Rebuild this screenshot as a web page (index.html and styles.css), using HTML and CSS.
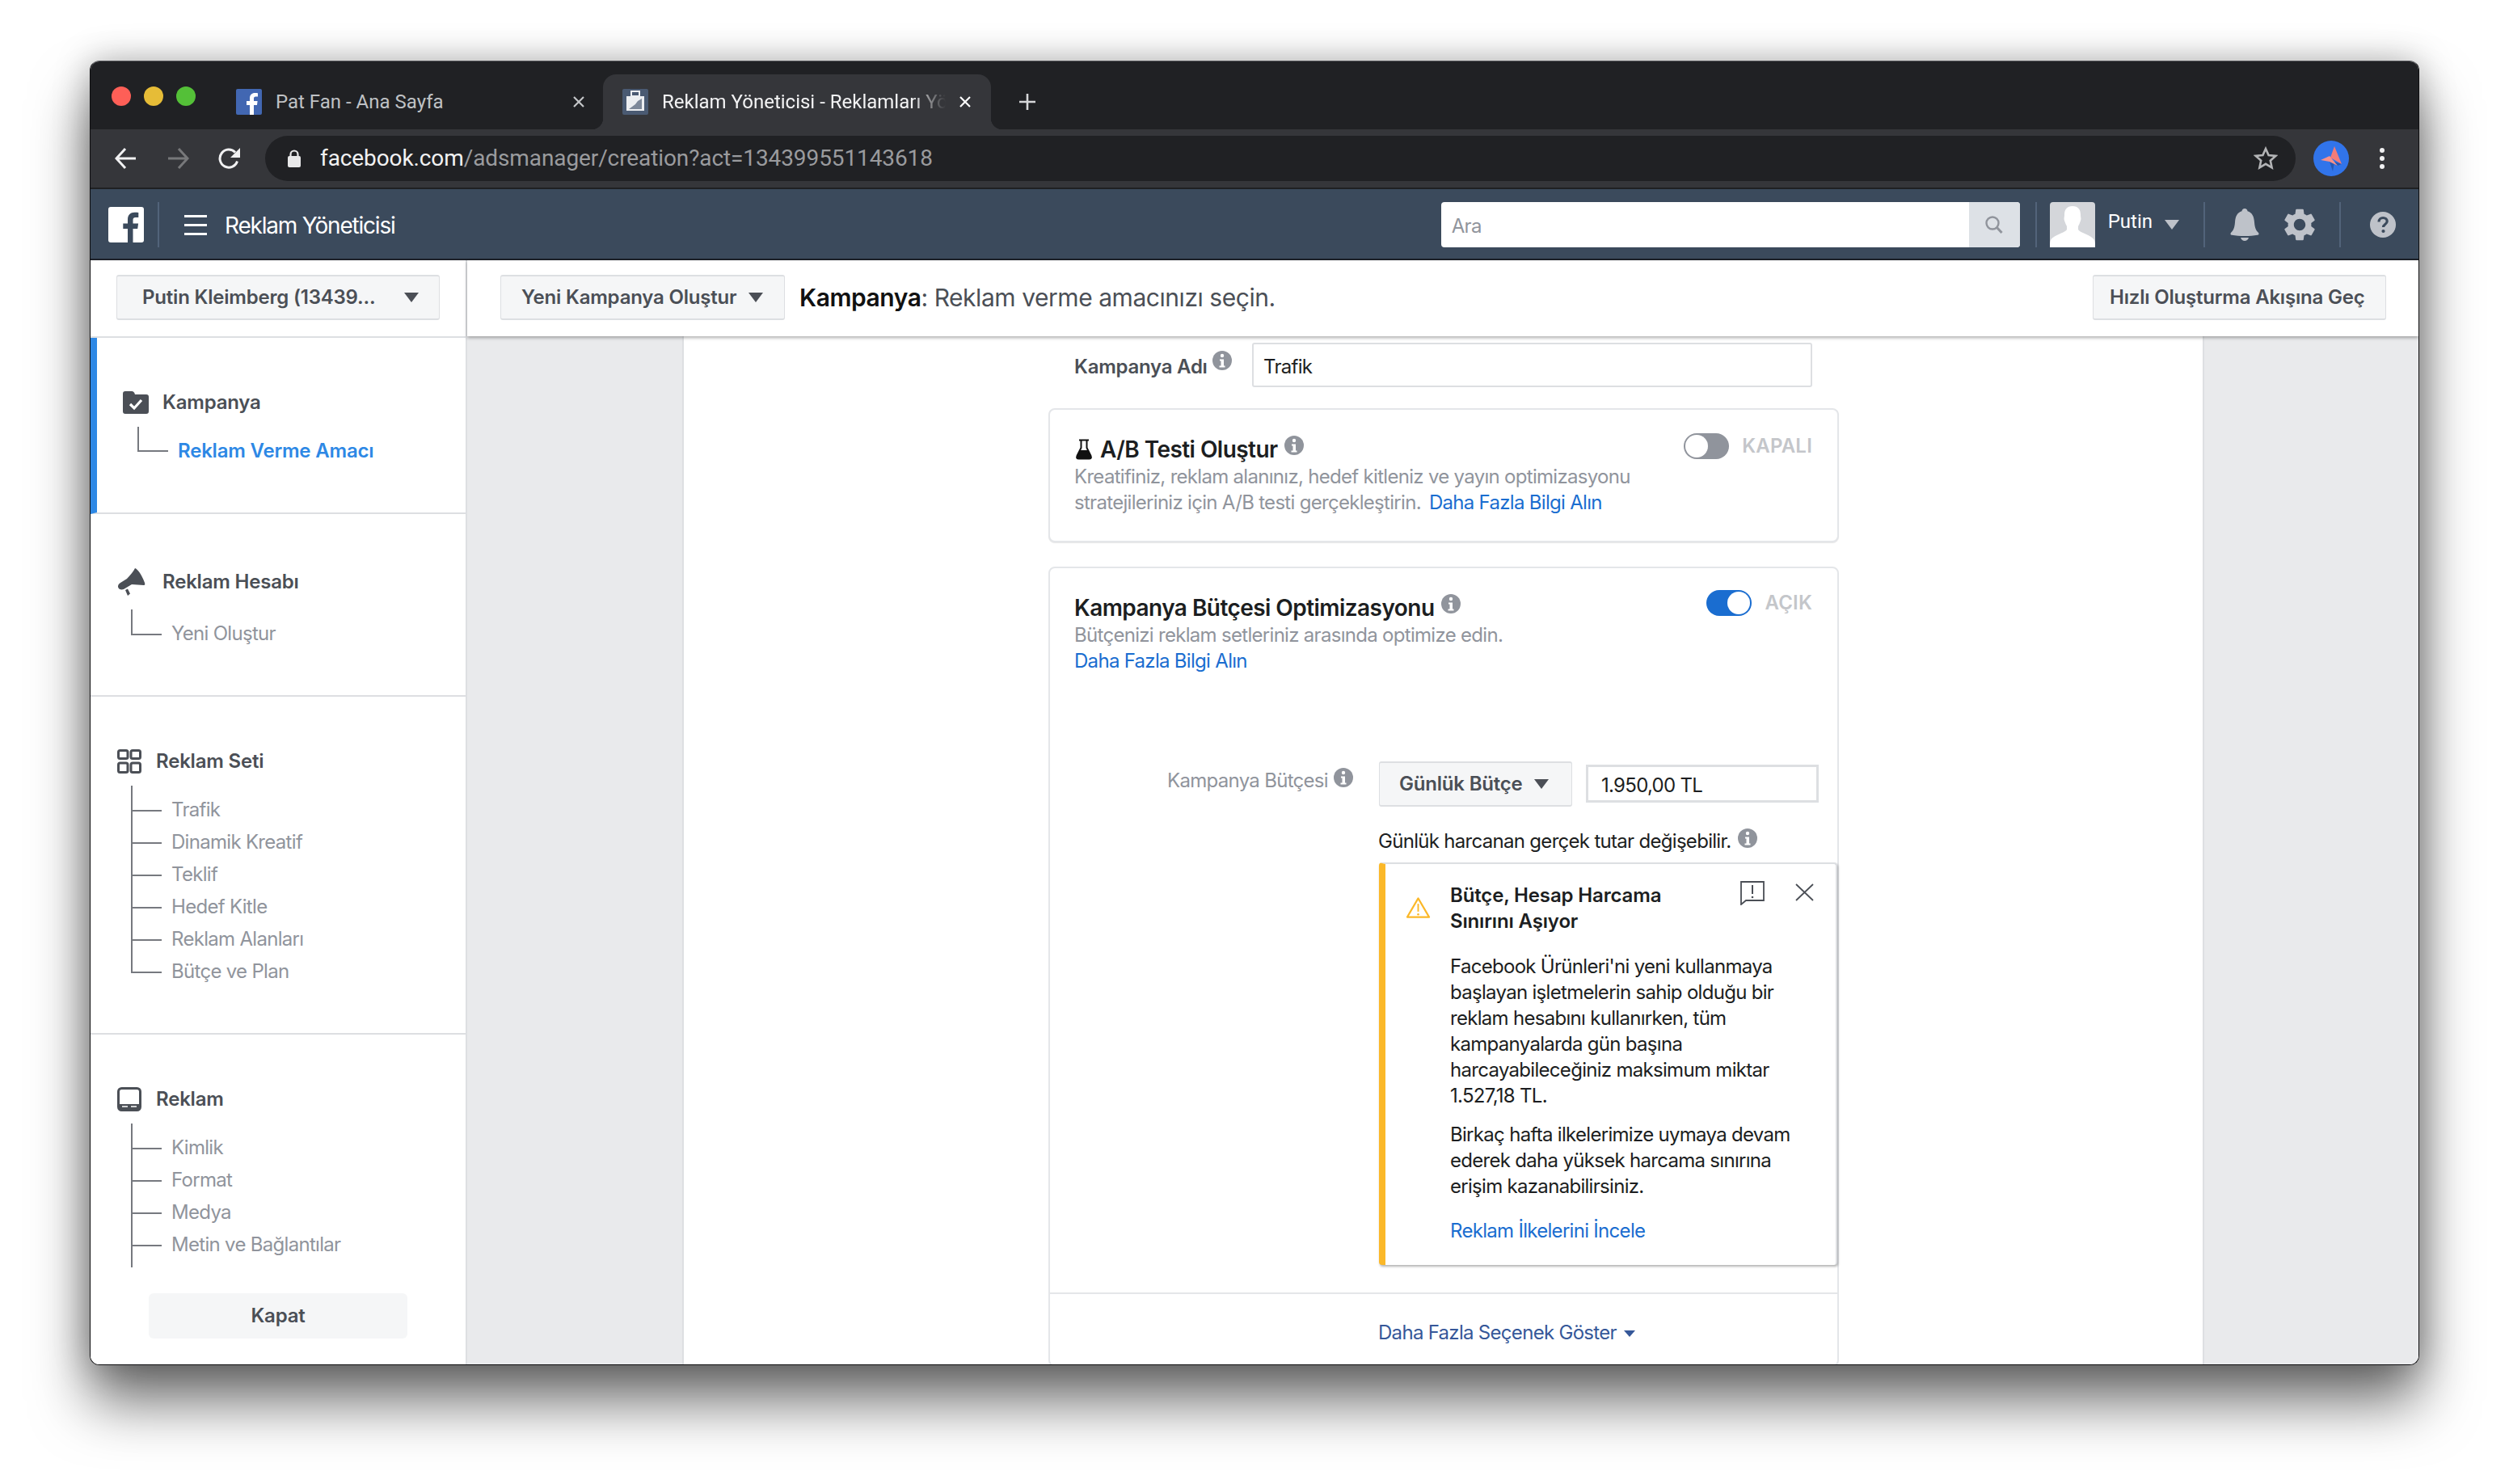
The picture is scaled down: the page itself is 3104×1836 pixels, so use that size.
FILE: index.html
```html
<!DOCTYPE html>
<html lang="tr">
<head>
<meta charset="utf-8">
<title>Reklam Yöneticisi</title>
<link rel="stylesheet" href="styles.css">
</head>
<body>
<div class="window">
  <div class="tabstrip">
    <div class="lights"><i class="light red"></i><i class="light yellow"></i><i class="light green"></i></div>
    <div class="tab">
      <svg class="favicon" viewBox="0 0 32 32"><rect width="32" height="32" rx="2" fill="#4267b2"/><path fill="#fff" d="M22 32V20h4l.6-5H22v-3c0-1.4.4-2.4 2.4-2.4H27V5.2C26.5 5.1 25 5 23.3 5 19.7 5 17 7.2 17 11.5V15h-4v5h4v12z"/></svg>
      <span class="tab-title">Pat Fan - Ana Sayfa</span>
      <svg class="tab-x" viewBox="0 0 16 16"><path d="M2 2l12 12M14 2L2 14" stroke="#c4c6c9" stroke-width="2.2" fill="none"/></svg>
    </div>
    <div class="tab tab--active">
      <svg class="favicon" viewBox="0 0 32 32"><rect width="32" height="32" rx="2" fill="#4a5a72"/><rect x="5" y="9" width="22" height="18" fill="#eceef1"/><rect x="11" y="3" width="10" height="6" fill="none" stroke="#eceef1" stroke-width="2"/><path d="M8 25l8-6 3-4 5-3v13z" fill="#7d8899"/></svg>
      <span class="tab-title tab-title--fade">Reklam Yöneticisi - Reklamları Yönet</span>
      <svg class="tab-x" viewBox="0 0 16 16"><path d="M2 2l12 12M14 2L2 14" stroke="#fff" stroke-width="2.2" fill="none"/></svg>
    </div>
    <svg class="newtab" viewBox="0 0 24 24"><path d="M12 2v20M2 12h20" stroke="#d6d7d9" stroke-width="2.6" fill="none"/></svg>
  </div>

  <div class="toolbar">
    <svg class="nav" viewBox="0 0 28 28"><path d="M26 14H3M13 2L2 14l11 12" stroke="#f1f1f2" stroke-width="3" fill="none"/></svg>
    <svg class="nav" viewBox="0 0 28 28"><path d="M2 14h23M15 2l11 12-11 12" stroke="#77787a" stroke-width="3" fill="none"/></svg>
    <svg class="nav" viewBox="0 0 28 28"><path d="M23.5 17.5A11 11 0 1 1 21 6.5" stroke="#f1f1f2" stroke-width="3" fill="none"/><path d="M27 1v12H15z" fill="#f1f1f2"/></svg>
    <div class="omnibox">
      <svg class="lock" viewBox="0 0 16 22"><rect y="8" width="16" height="14" rx="2" fill="#e8e8e9"/><path d="M3.5 9V6a4.5 4.5 0 0 1 9 0v3" stroke="#e8e8e9" stroke-width="2.2" fill="none"/></svg>
      <div class="url"><span class="url-host">facebook.com</span>/adsmanager/creation?act=134399551143618</div>
      <svg class="star" viewBox="0 0 30 30"><path d="M15 3l3.6 8 8.7.9-6.5 5.8 1.8 8.6L15 21.8l-7.600 4.500 1.800-8.600-6.500-5.800 8.700-.9z" stroke="#b3b4b6" stroke-width="2.6" fill="none" stroke-linejoin="miter"/></svg>
    </div>
    <svg class="profile" viewBox="0 0 44 44"><circle cx="22" cy="22" r="22" fill="#3174ea"/><path d="M20 26l10 5 5-2-9-3-2 12z" fill="#2559b5"/><path d="M26 7l9 22-14-8z" fill="#f47c78"/><path d="M9 24l11-5 10 12-10-5z" fill="#f8908a"/></svg>
    <div class="kebab"><i></i><i></i><i></i></div>
  </div>

  <header class="fbbar">
    <svg class="fblogo" viewBox="0 0 44 44"><rect width="44" height="44" rx="3" fill="#fff"/><path fill="#3b4a5c" d="M30.500 44V27h5.700l.9-6.600h-6.600v-4.200c0-1.900.5-3.200 3.300-3.200h3.500V7.100C36.700 7 34.800 6.800 32.500 6.800c-5 0-8.500 3.100-8.500 8.800v4.800h-5.700V27H24v17z"/></svg>
    <i class="vsep vsep--logo"></i>
    <div class="burger"><i></i><i></i><i></i></div>
    <div class="fbtitle">Reklam Yöneticisi</div>
    <div class="search">
      <div class="search-input">Ara</div>
      <div class="search-btn"><svg viewBox="0 0 24 24"><circle cx="10" cy="10" r="7.500" stroke="#90949c" stroke-width="2.400" fill="none"/><path d="M15.500 15.500l6 6.500" stroke="#90949c" stroke-width="3" fill="none"/></svg></div>
    </div>
    <i class="vsep vsep--search"></i>
    <svg class="userpic" viewBox="0 0 56 56"><rect width="56" height="56" rx="4" fill="#d4d6da"/><path fill="#fff" d="M28 5c7 0 10 4 10 11 0 3 1 4 0 7-1 3-2 5-3 7v4c2 4 17 7 20 13 1 3 1 5 1 9H0c0-4 0-6 1-9 3-6 18-9 20-13v-4c-1-2-2-4-3-7-1-3 0-4 0-7 0-7 3-11 10-11z"/></svg>
    <div class="username">Putin</div>
    <i class="caret caret--light"></i>
    <i class="vsep vsep--user"></i>
    <svg class="bell" viewBox="0 0 36 40"><path fill="#bec2c9" d="M18 0c2 0 3.500 1.400 3.500 3.200C27.500 5 29.500 10 30 17c.5 7 2 10 5 13 1 1.200.6 2.500-1 2.800-5 1-10 1.200-16 1.200s-11-.2-16-1.200c-1.600-.3-2-1.600-1-2.800 3-3 4.500-6 5-13 .5-7 2.500-12 8.500-13.800C14.500 1.400 16 0 18 0zM13 36h10c-.8 2.400-2.800 4-5 4s-4.200-1.600-5-4z"/></svg>
    <svg class="gear" viewBox="2.300 2 19.400 20"><path fill="#bec2c9" d="M19.140 12.940c.04-.3.06-.61.06-.94 0-.32-.02-.64-.07-.94l2.030-1.580a.49.49 0 0 0 .12-.61l-1.920-3.320a.488.488 0 0 0-.59-.22l-2.390.96c-.5-.38-1.030-.7-1.620-.94l-.36-2.540a.484.484 0 0 0-.48-.41h-3.840c-.24 0-.43.17-.47.41l-.36 2.540c-.59.24-1.130.57-1.620.94l-2.390-.96c-.22-.08-.47 0-.59.22L2.740 8.870c-.12.21-.08.47.12.61l2.030 1.580c-.05.3-.09.63-.09.94s.02.64.07.94l-2.030 1.580a.49.49 0 0 0-.12.61l1.920 3.320c.12.22.37.29.59.22l2.390-.96c.5.38 1.030.7 1.620.94l.36 2.540c.05.24.24.41.48.41h3.840c.24 0 .44-.17.47-.41l.36-2.540c.59-.24 1.130-.56 1.620-.94l2.390.96c.22.08.47 0 .59-.22l1.920-3.320c.12-.22.07-.47-.12-.61l-2.010-1.580zM12 15.600c-1.980 0-3.600-1.620-3.600-3.600s1.620-3.600 3.600-3.600 3.600 1.620 3.600 3.600-1.620 3.600-3.600 3.600z"/></svg>
    <i class="vsep vsep--gear"></i>
    <svg class="help" viewBox="0 0 32 32"><circle cx="16" cy="16" r="16" fill="#bec2c9"/><path d="M11 12.500c0-3 2.200-5 5.200-5s5 1.800 5 4.300c0 3.700-4.700 3.800-4.700 7.200" stroke="#3b4a5c" stroke-width="3.200" fill="none"/><circle cx="16.500" cy="24" r="2.100" fill="#3b4a5c"/></svg>
  </header>

  <div class="app">
    <aside class="sidebar">
      <div class="account">
        <button class="dropdown dropdown--account"><span>Putin Kleimberg (13439...</span><i class="caret"></i></button>
      </div>

      <section class="step step--active">
        <div class="step-head">
          <svg class="step-icon" viewBox="0 0 32 28"><path fill="#4b4f56" d="M3 0h8c2 0 3 1 4 4h14c2 0 3 1 3 3v18c0 2-1 3-3 3H3c-2 0-3-1-3-3V3c0-2 1-3 3-3z"/><path d="M9 16l5 5 9-10" stroke="#fff" stroke-width="3.200" fill="none"/></svg>
          <span>Kampanya</span>
        </div>
        <ul class="tree tree--one">
          <li class="tree-item tree-item--current"><i class="tick"></i>Reklam Verme Amacı</li>
        </ul>
      </section>

      <section class="step step--account">
        <div class="step-head step-head--wide">
          <svg class="step-icon step-icon--mega" viewBox="0 0 34 34"><path fill="#4b4f56" d="M21 0c3 1 8 7 12 18 .5 2 .500 3-1 3L17 20 7 26l-2.500 .5C1 26 0 24 0 22.500c0-2 1-3 3-4.500l8-5C15 9 19 4 21 0zM9 27l3-1.500 3 6-3 2.500z"/></svg>
          <span>Reklam Hesabı</span>
        </div>
        <ul class="tree tree--two">
          <li class="tree-item"><i class="tick"></i>Yeni Oluştur</li>
        </ul>
      </section>

      <section class="step step--set">
        <div class="step-head">
          <svg class="step-icon step-icon--square" viewBox="0 0 30 30"><g fill="none" stroke="#4b4f56" stroke-width="3"><rect x="1.500" y="1.500" width="11.500" height="10" rx="2"/><rect x="17" y="1.500" width="11.500" height="10" rx="2"/><rect x="1.500" y="17" width="11.500" height="11.500" rx="2"/><rect x="17" y="17" width="11.500" height="11.500" rx="2"/></g></svg>
          <span>Reklam Seti</span>
        </div>
        <ul class="tree tree--set">
          <li class="tree-item"><i class="tick"></i>Trafik</li>
          <li class="tree-item"><i class="tick"></i>Dinamik Kreatif</li>
          <li class="tree-item"><i class="tick"></i>Teklif</li>
          <li class="tree-item"><i class="tick"></i>Hedef Kitle</li>
          <li class="tree-item"><i class="tick"></i>Reklam Alanları</li>
          <li class="tree-item"><i class="tick"></i>Bütçe ve Plan</li>
        </ul>
      </section>

      <section class="step step--ad">
        <div class="step-head">
          <svg class="step-icon step-icon--square" viewBox="0 0 30 30"><rect x="1.500" y="1.500" width="27" height="27" rx="4" fill="none" stroke="#4b4f56" stroke-width="3"/><path d="M2 21h26v6H2z" fill="#4b4f56"/><path d="M6 24h7M17 24h7" stroke="#fff" stroke-width="1.500"/></svg>
          <span>Reklam</span>
        </div>
        <ul class="tree tree--ad">
          <li class="tree-item"><i class="tick"></i>Kimlik</li>
          <li class="tree-item"><i class="tick"></i>Format</li>
          <li class="tree-item"><i class="tick"></i>Medya</li>
          <li class="tree-item"><i class="tick"></i>Metin ve Bağlantılar</li>
        </ul>
        <button class="close-btn">Kapat</button>
      </section>
    </aside>

    <main class="main">
      <div class="subheader">
        <button class="dropdown dropdown--new"><span>Yeni Kampanya Oluştur</span><i class="caret"></i></button>
        <div class="crumb"><b>Kampanya</b>: Reklam verme amacınızı seçin.</div>
        <button class="dropdown dropdown--quick">Hızlı Oluşturma Akışına Geç</button>
      </div>

      <div class="canvas">
        <div class="sheet">
          <div class="form">
            <div class="name-row">
              <label class="name-label">Kampanya Adı</label>
              <svg class="info info--name" viewBox="0 0 24 24"><use href="#i"/></svg>
              <div class="input input--name">Trafik</div>
            </div>

            <section class="card card--ab">
              <div class="card-text">
                <h2 class="card-title"><svg class="flask" viewBox="0 0 22 26"><path d="M5 1.500h12M7.500 2v9L2.500 21c-1 2.500 0 3.500 2 3.500h13c2 0 3-1 2-3.500l-5-10V2" fill="none" stroke="#111" stroke-width="2"/><path d="M6 14h10l4 9-1 2H3l-1-2z" fill="#111"/></svg>A/B Testi Oluştur<svg class="info info--title" viewBox="0 0 24 24"><use href="#i"/></svg></h2>
                <p class="card-desc">Kreatifiniz, reklam alanınız, hedef kitleniz ve yayın optimizasyonu<br>stratejileriniz için A/B testi gerçekleştirin. <a class="link link--inline">Daha Fazla Bilgi Alın</a></p>
              </div>
              <div class="switch"><span class="toggle"><i></i></span><span class="switch-label">KAPALI</span></div>
            </section>

            <section class="card card--budget">
              <div class="card-top">
                <div class="card-text card-text--budget">
                  <h2 class="card-title">Kampanya Bütçesi Optimizasyonu<svg class="info info--title" viewBox="0 0 24 24"><use href="#i"/></svg></h2>
                  <p class="card-desc">Bütçenizi reklam setleriniz arasında optimize edin.<br><a class="link">Daha Fazla Bilgi Alın</a></p>
                </div>
                <div class="switch"><span class="toggle toggle--on"><i></i></span><span class="switch-label">AÇIK</span></div>
              </div>

              <div class="budget">
                <div class="budget-label">Kampanya Bütçesi<svg class="info info--budget" viewBox="0 0 24 24"><use href="#i"/></svg></div>
                <div class="budget-body">
                  <div class="budget-controls">
                    <button class="dropdown dropdown--daily"><span>Günlük Bütçe</span><i class="caret"></i></button>
                    <div class="input input--amount">1.950,00 TL</div>
                  </div>
                  <div class="budget-note">Günlük harcanan gerçek tutar değişebilir.<svg class="info info--note" viewBox="0 0 24 24"><use href="#i"/></svg></div>
                  <div class="warning">
                    <svg class="warning-icon" viewBox="0 0 32 28"><path d="M16 2L2 26h28z" fill="none" stroke="#fbb829" stroke-width="2.200" stroke-linejoin="round"/><path d="M16 9v10" stroke="#fbb829" stroke-width="2"/><circle cx="16" cy="22.500" r="1.300" fill="#fbb829"/></svg>
                    <div class="warning-body">
                      <div class="warning-head">
                        <h3 class="warning-title">Bütçe, Hesap Harcama<br>Sınırını Aşıyor</h3>
                        <svg class="feedback" viewBox="0 0 30 30"><path d="M1 29V1h28v23H7z" fill="none" stroke="#4b4f56" stroke-width="1.800"/><path d="M15 5v11" stroke="#4b4f56" stroke-width="2"/><circle cx="15" cy="20" r="1.300" fill="#4b4f56"/></svg>
                        <svg class="dismiss" viewBox="0 0 23 22"><path d="M1 1l21 20M22 1L1 21" stroke="#4b4f56" stroke-width="1.800" fill="none"/></svg>
                      </div>
                      <p class="warning-text">Facebook Ürünleri'ni yeni kullanmaya<br>başlayan işletmelerin sahip olduğu bir<br>reklam hesabını kullanırken, tüm<br>kampanyalarda gün başına<br>harcayabileceğiniz maksimum miktar<br>1.527,18 TL.</p>
                      <p class="warning-text">Birkaç hafta ilkelerimize uymaya devam<br>ederek daha yüksek harcama sınırına<br>erişim kazanabilirsiniz.</p>
                      <a class="link link--warning">Reklam İlkelerini İncele</a>
                    </div>
                  </div>
                </div>
              </div>

              <div class="more"><span>Daha Fazla Seçenek Göster</span><i class="caret caret--small"></i></div>
            </section>
          </div>
        </div>
      </div>
    </main>
  </div>
</div>
<svg class="defs" aria-hidden="true"><symbol id="i" viewBox="0 0 24 24"><circle cx="12" cy="12" r="12" fill="#90949c"/><circle cx="12" cy="6" r="2.200" fill="#fff"/><path d="M9 10.500h5v8h1.500v2h-7v-2H10.500v-6H9z" fill="#fff"/></symbol></svg>
</body>
</html>
```

FILE: styles.css
```css
* { box-sizing: border-box; }
html, body { margin: 0; height: 100%; }
body {
  width: 3104px;
  height: 1836px;
  padding: 75px 0 0 111px;
  overflow: hidden;
  background: #fff;
  font-family: Inter, "Liberation Sans", sans-serif;
  font-size: 24px;
  line-height: 32px;
  letter-spacing: -0.7px;
  color: #1c1e21;
}
i { display: block; }
ul { list-style: none; margin: 0; padding: 0; }
p, h2, h3 { margin: 0; }
button { font: inherit; letter-spacing: inherit; margin: 0; }
.defs { width: 0; height: 0; display: block; }

.window {
  width: 2882px;
  height: 1614px;
  border: 1px solid #0e0e10;
  border-top-color: #55565a;
  border-radius: 12px;
  overflow: hidden;
  display: flex;
  flex-direction: column;
  box-shadow: 0 46px 70px rgba(0,0,0,.56), 0 0 44px rgba(0,0,0,.28);
  background: #fff;
}

/* browser chrome */
.tabstrip {
  height: 84px;
  flex: none;
  background: #202124;
  display: flex;
  align-items: flex-end;
  font-family: Roboto, sans-serif;
  letter-spacing: 0;
}
.lights { display: flex; gap: 16px; padding: 0 0 29px 26px; width: 156px; align-self: flex-end; }
.light { width: 24px; height: 24px; border-radius: 50%; }
.red { background: #fe5f57; }
.yellow { background: #e6bc37; }
.green { background: #54c038; }
.tab {
  width: 478px;
  height: 68px;
  padding: 0 22px 0 24px;
  display: flex;
  align-items: center;
  color: #bfc1c4;
}
.tab--active {
  width: 480px;
  padding-right: 24px;
  background: #35363a;
  color: #f3f3f4;
  border-radius: 16px 16px 0 0;
  position: relative;
}
.tab--active::before,
.tab--active::after {
  content: "";
  position: absolute;
  bottom: 0;
  width: 14px;
  height: 14px;
}
.tab--active::before { left: -14px; background: radial-gradient(circle at 0 0, transparent 14px, #35363a 14.5px); }
.tab--active::after { right: -14px; background: radial-gradient(circle at 100% 0, transparent 14px, #35363a 14.5px); }
.favicon { width: 32px; height: 32px; flex: none; margin-right: 17px; }
.tab-title { flex: 1; min-width: 0; white-space: nowrap; overflow: hidden; }
.tab-title--fade { -webkit-mask-image: linear-gradient(90deg, #000 88%, transparent 100%); mask-image: linear-gradient(90deg, #000 88%, transparent 100%); }
.tab-x { width: 16px; height: 16px; flex: none; margin-left: 16px; }
.newtab { width: 24px; height: 24px; margin: 0 0 22px 33px; }

.toolbar {
  height: 72px;
  flex: none;
  background: #35363a;
  display: flex;
  align-items: center;
  padding-left: 30px;
}
.nav { width: 28px; height: 28px; flex: none; margin-right: 36px; }
.omnibox {
  width: 2512px;
  height: 56px;
  margin-left: -6px;
  border-radius: 28px;
  background: #202124;
  display: flex;
  align-items: center;
  padding: 0 22px 0 28px;
}
.lock { width: 16px; height: 22px; flex: none; }
.url { flex: 1; margin-left: 24px; font: 28px/32px Roboto, sans-serif; letter-spacing: -0.1px; color: #9a9b9e; white-space: nowrap; }
.url-host { color: #f1f1f2; }
.star { width: 30px; height: 30px; flex: none; }
.profile { width: 44px; height: 44px; flex: none; margin-left: 22px; }
.kebab { margin-left: 38px; display: flex; flex-direction: column; gap: 4px; }
.kebab i { width: 6px; height: 6px; border-radius: 50%; background: #f1f1f2; }

/* facebook bar */
.fbbar {
  height: 90px;
  flex: none;
  background: #3b4a5c;
  border-top: 2px solid #1f2023;
  border-bottom: 2px solid #1d2129;
  display: flex;
  align-items: center;
  padding: 2px 28px 0 22px;
  color: #fff;
}
.fblogo { width: 44px; height: 44px; flex: none; }
.vsep { width: 2px; height: 56px; flex: none; background: #52637a; }
.vsep--logo { margin-left: 17px; }
.burger { margin-left: 31px; display: flex; flex-direction: column; gap: 8px; }
.burger i { width: 28px; height: 3px; background: #fff; }
.fbtitle { margin: 2px 0 0 22px; font-size: 28px; letter-spacing: -1.2px; flex: none; }
.search {
  margin-left: auto;
  width: 716px;
  height: 56px;
  flex: none;
  display: flex;
  background: #fff;
  border-radius: 4px;
  overflow: hidden;
}
.search-input { flex: 1; padding: 14px 0 0 13px; color: #90949c; }
.search-btn { width: 63px; background: #dde1e6; display: flex; align-items: center; justify-content: center; }
.search-btn svg { width: 24px; height: 24px; }
.vsep--search { margin-left: 19px; }
.userpic { width: 56px; height: 56px; flex: none; margin-left: 16px; }
.username { margin-left: 16px; flex: none; margin-top: -8px; font-family: Roboto, sans-serif; letter-spacing: 0; }
.caret { width: 0; height: 0; flex: none; border-style: solid; border-width: 12px 9px 0; border-color: #4b4f56 transparent transparent; }
.caret--light { margin-left: 15px; border-top-color: #bec2c9; }
.caret--small { border-width: 8px 7px 0; border-top-color: #365899; margin-left: 9px; }
.vsep--user { margin-left: 30px; }
.bell { width: 36px; height: 40px; flex: none; margin-left: 31px; }
.gear { width: 40px; height: 40px; flex: none; margin-left: 30px; }
.vsep--gear { margin-left: 29px; }
.help { width: 32px; height: 32px; flex: none; margin-left: 36px; }

/* app */
.app { flex: 1; min-height: 0; display: flex; }
.sidebar {
  width: 466px;
  flex: none;
  border-right: 2px solid #dddfe2;
  background: #fff;
  color: #4b4f56;
}
.account { height: 96px; padding: 18px 0 0 32px; border-bottom: 2px solid #dddfe2; }
.dropdown {
  height: 56px;
  display: flex;
  align-items: center;
  justify-content: space-between;
  background: #f5f6f7;
  color: #4b4f56;
  border: 1px solid #dddfe2;
  border-width: 2px 1px;
  border-radius: 3px;
  font-weight: 600;
  letter-spacing: -0.2px;
  white-space: nowrap;
  flex: none;
}
.dropdown--account { width: 400px; padding: 0 25px 0 31px; }
.dropdown--new { width: 352px; padding: 0 26px 0 25px; }
.dropdown--quick { width: 363px; padding: 0 20px; }
.dropdown--daily { width: 239px; padding: 0 28px 0 24px; }

.step { border-bottom: 2px solid #dddfe2; padding-left: 33px; }
.step--active { height: 218px; padding-top: 64px; padding-left: 32px; border-left: 8px solid #2d88e5; }
.step--account { height: 226px; padding-top: 68px; }
.step--set { height: 418px; padding-top: 64px; }
.step--ad { border-bottom: 0; padding-top: 64px; }
.step-head { height: 32px; display: flex; align-items: center; font-weight: 600; letter-spacing: -0.2px; gap: 17px; }
.step-head--wide { gap: 20px; }
.step-icon { width: 32px; height: 28px; flex: none; }
.step-icon--mega { width: 36px; height: 34px; }
.step-icon--square { width: 30px; height: 30px; margin-right: 1px; }
.tree {
  display: flex;
  flex-direction: column;
  background: linear-gradient(#76797f, #76797f) no-repeat 0 0 / 2px 100%;
  padding-top: 10px;
  margin-left: 18px;
  color: #90949c;
}
.tree--one { margin-top: 14px; }
.tree--two { margin-top: 18px; margin-left: 17px; padding-top: 11px; }
.tree--set { margin-top: 14px; margin-left: 17px; padding-top: 11px; }
.tree--ad { margin-top: 14px; margin-left: 17px; padding-top: 11px; padding-bottom: 7px; }
.tree-item { height: 40px; flex: none; display: flex; align-items: center; padding: 0 0 3px 2px; }
.tree--one .tree-item:last-child, .tree--two .tree-item:last-child, .tree--set .tree-item:last-child { margin-bottom: -19px; }
.tree-item--current { color: #2d88e5; font-weight: 600; letter-spacing: -0.2px; padding-bottom: 0; }
.tick { width: 36px; height: 2px; flex: none; margin: 3px 12px 0 0; background: #76797f; }
.tree-item--current .tick { margin-top: 0; }
.close-btn {
  display: block;
  width: 320px;
  height: 56px;
  margin: 32px 0 0 39px;
  border: 0;
  border-radius: 6px;
  background: #f5f6f7;
  color: #4b4f56;
  font-weight: 600;
  letter-spacing: -0.2px;
}

.main { flex: 1; min-width: 0; display: flex; flex-direction: column; background: #e9eaec; }
.subheader {
  height: 94px;
  flex: none;
  background: #fff;
  display: flex;
  align-items: center;
  padding: 0 40px 3px 41px;
  box-shadow: 0 2px 4px rgba(0,0,0,.32);
  position: relative;
}
.crumb { flex: 1; margin-left: 18px; font-size: 30px; letter-spacing: -0.45px; color: #4b4f56; white-space: nowrap; }
.crumb b { font-weight: 600; color: #111; }

.canvas { flex: 1; min-height: 0; display: flex; justify-content: center; overflow: hidden; }
.sheet { width: 1883px; flex: none; background: #fff; border: solid #dddfe2; border-width: 0 2px; }
.form { width: 978px; margin: 0 auto; padding-top: 8px; transform: translateX(1px); }
.name-row { display: flex; height: 55px; padding-left: 32px; }
.name-label { padding-top: 14px; font-weight: 600; letter-spacing: -0.25px; color: #4b4f56; width: 171px; flex: none; }
.info { width: 24px; height: 24px; flex: none; display: block; }
.info--name { margin: 10px 0 0 0; }
.input { background: #fff; border: 2px solid #dddfe2; color: #1c1e21; }
.input--name { margin-left: 25px; width: 693px; padding: 12px 12px; border-radius: 3px; }
.card { border: 2px solid #e4e6e9; border-radius: 8px; background: #fff; padding: 29px 31px 0 30px; }
.card--ab { margin-top: 26px; height: 166px; display: flex; justify-content: space-between; align-items: flex-start; box-shadow: 0 1px 1px rgba(0,0,0,.1); }
.card--budget { margin-top: 30px; padding-top: 27px; }
.card-top { display: flex; justify-content: space-between; align-items: flex-start; }
.card-text { margin-top: 4px; }
.card-text--budget { margin-top: 6px; }
.card-title { font-size: 28px; line-height: 32px; font-weight: 600; letter-spacing: -0.55px; color: #1c1e21; display: flex; align-items: flex-start; white-space: nowrap; }
.flask { width: 22px; height: 26px; flex: none; margin: 3px 9px 0 1px; }
.info--title { margin: -1px 0 0 8px; }
.card-desc { margin-top: 2px; color: #90949c; white-space: nowrap; }
.link { color: #1a6dd0; }
.link--inline { margin-left: 4px; }
.switch { display: flex; align-items: center; gap: 16px; font-weight: 600; letter-spacing: 0.2px; color: #c4c6ca; }
.toggle { width: 56px; height: 32px; border-radius: 16px; padding: 2px; background: #90949c; display: flex; justify-content: flex-start; flex: none; }
.toggle i { width: 28px; height: 28px; border-radius: 50%; background: #fff; }
.toggle--on { background: #1a6dd0; justify-content: flex-end; }

.budget { margin: 108px -31px 0 0; display: grid; grid-template-columns: 377px 1fr; }
.budget-label { padding: 8px 0 0 115px; color: #90949c; display: flex; align-items: flex-start; white-space: nowrap; }
.info--budget { margin: 0 0 0 7px; }
.budget-body { min-width: 0; }
.budget-controls { display: flex; gap: 17px; align-items: flex-start; }
.input--amount { width: 288px; height: 47px; margin-top: 4px; border-width: 3px; padding: 7px 16px; }
.budget-note { margin: 27px 0 0 -1px; display: flex; white-space: nowrap; color: #1c1e21; }
.info--note { margin: 0 0 0 8px; }
.warning {
  margin-top: 10px;
  height: 498px;
  display: flex;
  background: #fff;
  border: 2px solid #dddfe2;
  border-left: 8px solid #fbb829;
  border-bottom: 0;
  border-radius: 4px;
  box-shadow: 1px 2px 3px rgba(0,0,0,.3);
  padding: 23px 27px 0 25px;
}
.warning-icon { width: 31px; height: 28px; flex: none; margin: 17px 24px 0 0; }
.warning-body { flex: 1; min-width: 0; }
.warning-head { display: flex; align-items: flex-start; }
.warning-title { flex: 1; font-size: 24px; line-height: 32px; font-weight: 600; letter-spacing: -0.15px; }
.feedback { width: 30px; height: 30px; flex: none; margin-top: -2px; }
.dismiss { width: 23px; height: 22px; flex: none; margin: 1px 0 0 38px; }
.warning-text { margin-top: 24px; white-space: nowrap; }
.warning-text + .warning-text { margin-top: 16px; }
.link--warning { display: block; margin-top: 23px; }
.more { margin: 34px -31px 0 -30px; height: 90px; border-top: 2px solid #e4e6e9; padding: 32px 0 0 406px; display: flex; align-items: flex-start; color: #365899; }
.more .caret { margin-top: 13px; }
```
